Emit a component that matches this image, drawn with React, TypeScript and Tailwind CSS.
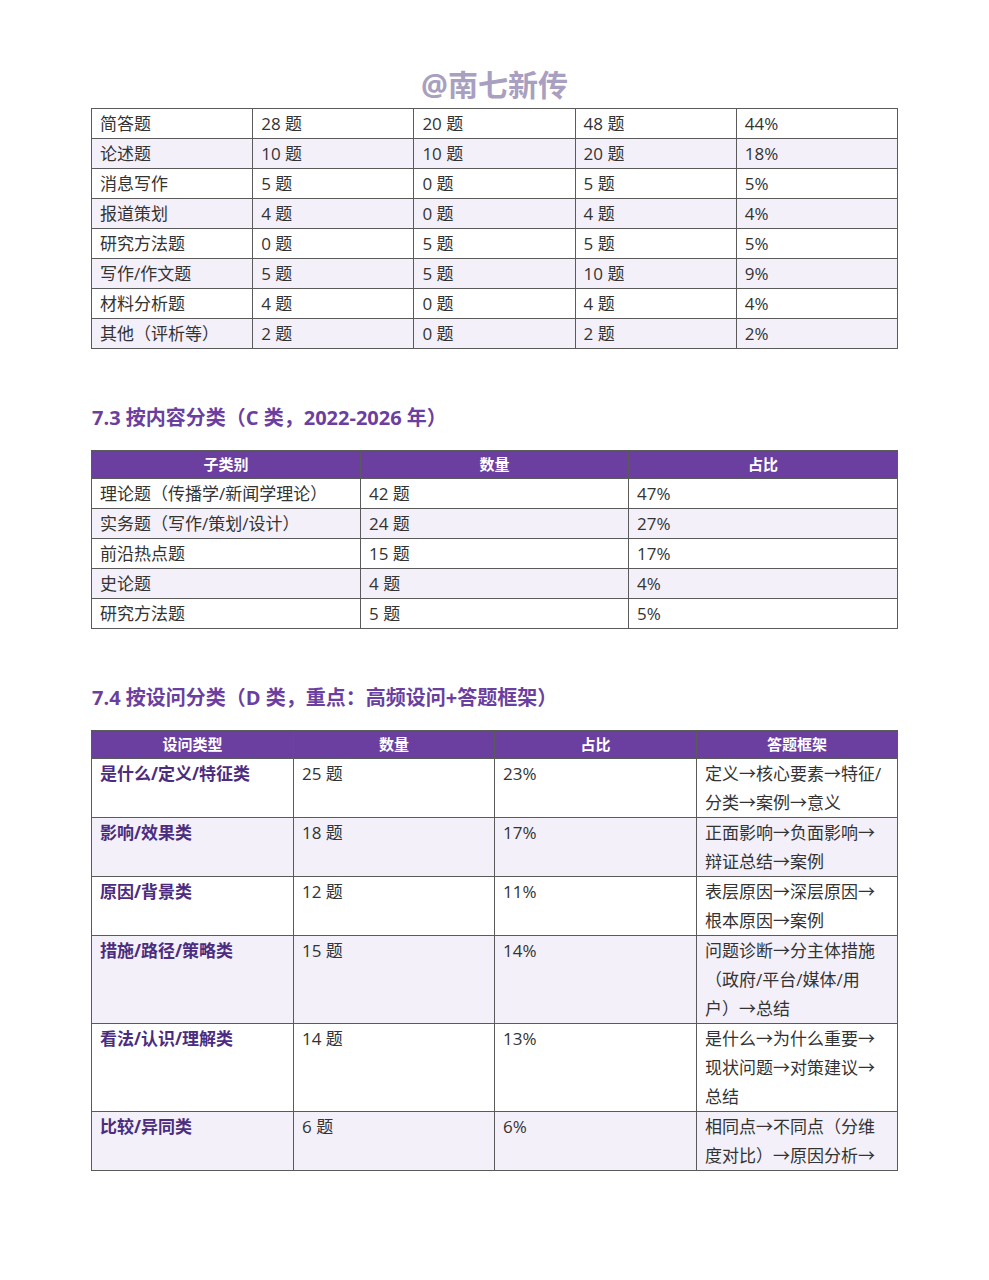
const T1: string[][] = [
  ["简答题", "28 题", "20 题", "48 题", "44%"],
  ["论述题", "10 题", "10 题", "20 题", "18%"],
  ["消息写作", "5 题", "0 题", "5 题", "5%"],
  ["报道策划", "4 题", "0 题", "4 题", "4%"],
  ["研究方法题", "0 题", "5 题", "5 题", "5%"],
  ["写作/作文题", "5 题", "5 题", "10 题", "9%"],
  ["材料分析题", "4 题", "0 题", "4 题", "4%"],
  ["其他（评析等）", "2 题", "0 题", "2 题", "2%"],
];

const T2: string[][] = [
  ["理论题（传播学/新闻学理论）", "42 题", "47%"],
  ["实务题（写作/策划/设计）", "24 题", "27%"],
  ["前沿热点题", "15 题", "17%"],
  ["史论题", "4 题", "4%"],
  ["研究方法题", "5 题", "5%"],
];

const T3: string[][] = [
  ["是什么/定义/特征类", "25 题", "23%", "定义→核心要素→特征/分类→案例→意义"],
  ["影响/效果类", "18 题", "17%", "正面影响→负面影响→辩证总结→案例"],
  ["原因/背景类", "12 题", "11%", "表层原因→深层原因→根本原因→案例"],
  ["措施/路径/策略类", "15 题", "14%", "问题诊断→分主体措施（政府/平台/媒体/用户）→总结"],
  ["看法/认识/理解类", "14 题", "13%", "是什么→为什么重要→现状问题→对策建议→总结"],
  ["比较/异同类", "6 题", "6%", "相同点→不同点（分维度对比）→原因分析→"],
];

const td = "border border-[#5a5a5a] px-[8px] py-0 align-top text-[17px] leading-[29px] text-[#333]";
const th = "border border-[#5a5a5a] px-[8px] py-0 text-center text-[15px] leading-[27px] font-bold text-white";

function Heading({ children }: { children: React.ReactNode }) {
  return (
    <h2 className="mt-[53px] mb-[16px] pl-[1px] text-[20px] leading-[32px] font-bold text-[#6b3fa0]">{children}</h2>
  );
}

export default function App() {
  return (
    <div className="min-h-[1280px] w-[989px] bg-white font-['Open_Sans','Noto_Sans_CJK_SC',sans-serif]">
      <div className="flex h-[108px] items-end justify-center pb-[5px]">
        <span className="text-[30px] leading-[36px] font-bold text-[#a99fc0]">@南七新传</span>
      </div>

      <div className="px-[91px] pb-[100px]">
        <table className="w-full table-fixed border-collapse">
          <tbody>
            {T1.map((r, i) => (
              <tr key={i} className={i % 2 ? "bg-[#f3f0f9]" : "bg-white"}>
                {r.map((c, j) => (
                  <td key={j} className={td}>{c}</td>
                ))}
              </tr>
            ))}
          </tbody>
        </table>

        <Heading>7.3 按内容分类（C 类，2022-2026 年）</Heading>
        <table className="w-full table-fixed border-collapse">
          <colgroup>
            <col className="w-[269px]" />
            <col className="w-[268px]" />
            <col />
          </colgroup>
          <thead>
            <tr className="bg-[#6b3fa0]">
              <th className={th}>子类别</th>
              <th className={th}>数量</th>
              <th className={th}>占比</th>
            </tr>
          </thead>
          <tbody>
            {T2.map((r, i) => (
              <tr key={i} className={i % 2 ? "bg-[#f3f0f9]" : "bg-white"}>
                {r.map((c, j) => (
                  <td key={j} className={td}>{c}</td>
                ))}
              </tr>
            ))}
          </tbody>
        </table>

        <Heading>7.4 按设问分类（D 类，重点：高频设问+答题框架）</Heading>
        <table className="w-full table-fixed border-collapse">
          <colgroup>
            <col className="w-[202px]" />
            <col className="w-[201px]" />
            <col className="w-[202px]" />
            <col />
          </colgroup>
          <thead>
            <tr className="bg-[#6b3fa0]">
              <th className={th}>设问类型</th>
              <th className={th}>数量</th>
              <th className={th}>占比</th>
              <th className={th}>答题框架</th>
            </tr>
          </thead>
          <tbody>
            {T3.map((r, i) => (
              <tr key={i} className={i % 2 ? "bg-[#f3f0f9]" : "bg-white"}>
                {r.map((c, j) => (
                  <td
                    key={j}
                    className={
                      j === 0 ? `${td} font-bold !text-[#4b2c7f]` : j === 3 ? `${td} !pr-[14px]` : td
                    }
                  >
                    {c}
                  </td>
                ))}
              </tr>
            ))}
          </tbody>
        </table>
      </div>
    </div>
  );
}
